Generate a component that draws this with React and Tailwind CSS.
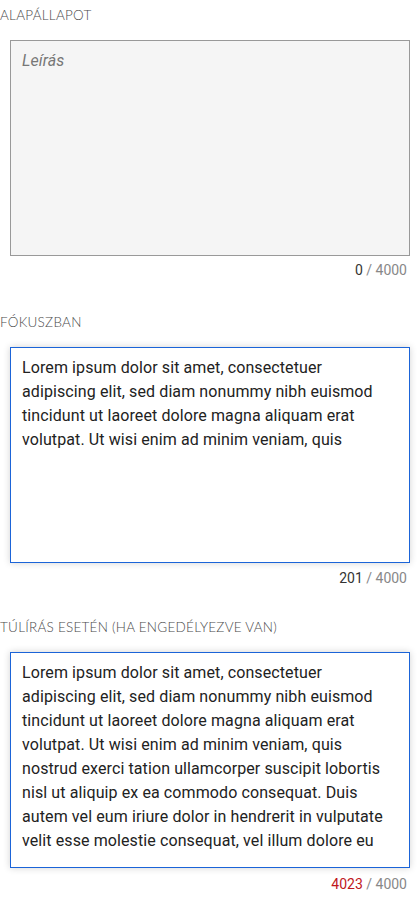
const BODY = [
  'Lorem ipsum dolor sit amet, consectetuer',
  'adipiscing elit, sed diam nonummy nibh euismod',
  'tincidunt ut laoreet dolore magna aliquam erat',
  'volutpat. Ut wisi enim ad minim veniam, quis',
]

const LONG = [
  ...BODY,
  'nostrud exerci tation ullamcorper suscipit lobortis',
  'nisl ut aliquip ex ea commodo consequat. Duis',
  'autem vel eum iriure dolor in hendrerit in vulputate',
  'velit esse molestie consequat, vel illum dolore eu',
]

function Lines({ lines }) {
  return lines.map((l, i) => (
    <div key={i} className="whitespace-nowrap">
      {l}
    </div>
  ))
}

function Field({ label, children, box, count, countClass, countGap }) {
  return (
    <section>
      <h2 className="font-['Lato',sans-serif] text-[13.5px] leading-[30px] font-light tracking-[0.25px] text-[#4a4a4a]">
        {label}
      </h2>
      <div className={`ml-[10px] mr-[8px] mt-[10px] h-[216px] overflow-hidden border px-[11px] pt-[8px] font-['Roboto',sans-serif] text-[16px] leading-[24px] tracking-[0.1px] ${box}`}>
        {children}
      </div>
      <div className={`mr-[11px] ${countGap} text-right font-['Roboto',sans-serif] text-[14px] leading-[16px] text-[#888]`}>
        <span className={countClass}>{count}</span> / 4000
      </div>
    </section>
  )
}

export default function App() {
  return (
    <div className="min-h-[900px] w-[418px] bg-white">
      <Field
        label="ALAPÁLLAPOT"
        box="border-[#999] bg-[#f5f5f5] text-[#777] italic"
        count="0"
        countClass="text-[#333]"
        countGap="mt-[6px]"
      >
        Leírás
      </Field>

      <div className="h-[29px]" />

      <Field
        label="FÓKUSZBAN"
        box="border-[#1b64d8] bg-white text-[#222] shadow-[0_0_7px_rgba(0,0,0,0.18)]"
        count="201"
        countClass="text-[#333]"
        countGap="mt-[7px]"
      >
        <Lines lines={BODY} />
      </Field>

      <div className="h-[26px]" />

      <Field
        label="TÚLÍRÁS ESETÉN (HA ENGEDÉLYEZVE VAN)"
        box="border-[#1b64d8] bg-white text-[#222] shadow-[0_0_7px_rgba(0,0,0,0.18)]"
        count="4023"
        countClass="text-[#c0161c]"
        countGap="mt-[8px]"
      >
        <Lines lines={LONG} />
      </Field>
    </div>
  )
}
